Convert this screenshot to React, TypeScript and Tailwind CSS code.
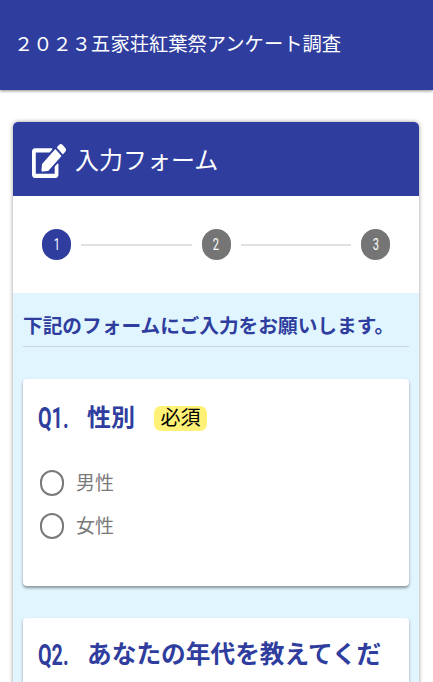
import { FaEdit } from "react-icons/fa";

const jp = "font-['Roboto','Noto_Sans_CJK_JP',sans-serif]";

function Step({ n, active }: { n: number; active?: boolean }) {
  return (
    <div className={`flex h-[31px] w-[29px] shrink-0 items-center justify-center rounded-full text-white ${active ? "bg-[#2f3e9e]" : "bg-[#757575]"}`}>
      <span className="inline-block scale-x-[0.65] text-[17px] font-normal leading-none">{n}</span>
    </div>
  );
}

function Radio({ label }: { label: string }) {
  return (
    <div className="flex h-[43px] items-center">
      <div className="ml-[17px] h-[26px] w-[24px] rounded-full border-[2.5px] border-[#7a7a7a]" />
      <span className="ml-[12px] mt-[1px] text-[19px] leading-none text-[#7a7a7a]">{label}</span>
    </div>
  );
}

function Q({ n }: { n: string }) {
  return <span className="inline-block w-[49px] origin-left scale-x-[0.68] text-[29px] leading-none font-bold">{n}</span>;
}

export default function App() {
  return (
    <div className={`h-[682px] w-[433px] overflow-hidden bg-white ${jp}`}>
      <header className="flex h-[90px] items-center bg-[#2f3e9e] pl-[14px] text-[19.3px] leading-none text-white shadow-[0_1px_3px_rgba(0,0,0,0.45)]">
        ２０２３五家荘紅葉祭アンケート調査
      </header>
      <main className="ml-[13px] mr-[14px] mt-[32px] overflow-hidden rounded-t-[5px] shadow-[0_0_4px_rgba(0,0,0,0.4)]">
        <div className="flex h-[74px] items-center bg-[#2f3e9e] pl-[19px] text-white">
          <FaEdit className="mt-[3px] h-[34px] w-[34px] shrink-0" preserveAspectRatio="none" />
          <span className="ml-[9px] mt-[3px] text-[24px] leading-none">入力フォーム</span>
        </div>
        <div className="flex h-[97px] items-center rounded-t-[4px] bg-white px-[29px]">
          <Step n={1} active />
          <div className="mx-[10px] h-[2px] flex-1 bg-[#e0e0e0]" />
          <Step n={2} />
          <div className="mx-[10px] h-[2px] flex-1 bg-[#e0e0e0]" />
          <Step n={3} />
        </div>
        <div className="h-[400px] bg-[#e1f5fe] px-[10px] pt-[20px]">
          <h2 className="border-b border-[#c9d6e2] pb-[5px] text-[19.7px] leading-[28px] font-bold whitespace-nowrap text-[#2f3e9e]">
            下記のフォームにご入力をお願いします。
          </h2>
          <section className="mt-[32px] h-[207px] rounded-[4px] bg-white pl-[15px] pt-[23px] shadow-[0_2px_3px_rgba(0,0,0,0.4)]">
            <div className="flex h-[32px] items-center text-[#2f3e9e]">
              <Q n="Q1." />
              <span className="text-[24px] font-bold leading-none">性別</span>
              <span className="ml-[19px] rounded-[7px] bg-[#fff176] px-[6.5px] py-[2px] text-[20px] leading-[21px] text-black">必須</span>
            </div>
            <div className="-ml-[15px] mt-[27px]">
              <Radio label="男性" />
              <Radio label="女性" />
            </div>
          </section>
          <section className="mt-[32px] h-[120px] rounded-[4px] bg-white pl-[15px] pt-[21px] shadow-[0_2px_3px_rgba(0,0,0,0.4)]">
            <div className="flex h-[32px] items-center whitespace-nowrap text-[#2f3e9e]">
              <Q n="Q2." />
              <span className="text-[24.7px] font-bold leading-none">あなたの年代を教えてくだ</span>
            </div>
          </section>
        </div>
      </main>
    </div>
  );
}
